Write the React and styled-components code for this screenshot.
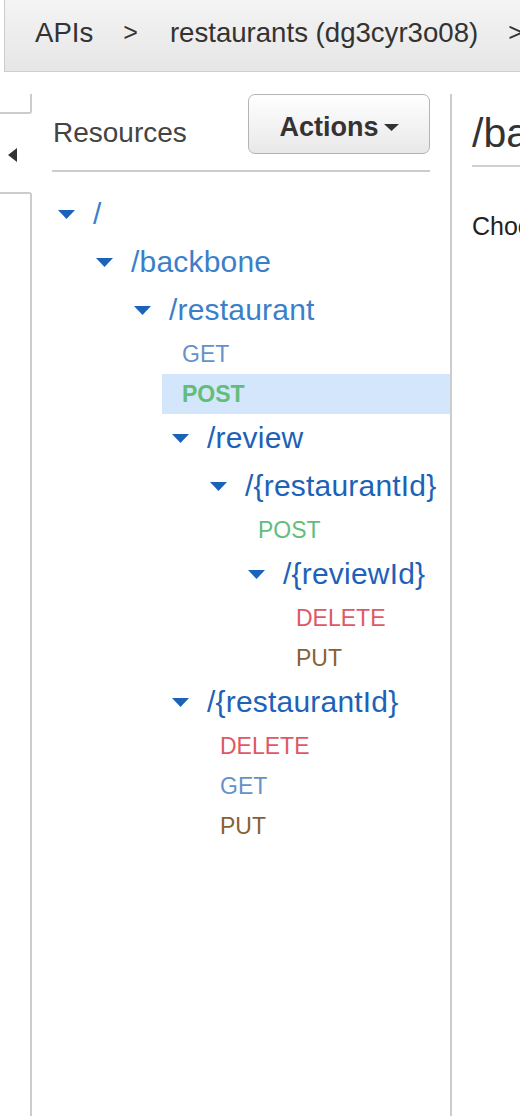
import React from "react";
import styled, { createGlobalStyle } from "styled-components";

const GlobalStyle = createGlobalStyle`
    html, body {
        margin: 0;
        padding: 0;
        background: #ffffff;
        font-family: "Liberation Sans", Arial, sans-serif;
    }
    #root {
        min-height: 100vh;
        display: flex;
        flex-direction: column;
    }
`;

const TopBar = styled.div`
    height: 72px;
    flex: none;
    box-sizing: border-box;
    display: flex;
    align-items: center;
    background: linear-gradient(#f4f4f4, #e6e6e6);
    border-bottom: 1px solid #cfcfcf;
    border-left: 1px solid #cccccc;
    margin-left: 4px;
    padding: 0 0 6px 30px;
    overflow: hidden;
    white-space: nowrap;
    font-size: 27.6px;
    color: #333333;
`;

const Crumb = styled.span`
    flex: none;
`;

const Sep = styled.span`
    flex: none;
    margin: 0 32px 0 30px;
    font-size: 25px;
`;

const Body = styled.div`
    flex: 1;
    display: flex;
    padding-top: 22px;
`;

const SideColumn = styled.div`
    width: 32px;
    flex: none;
    display: flex;
    flex-direction: column;
`;

const SideTopBox = styled.div`
    height: 18px;
    border-right: 2px solid #cccccc;
    border-bottom: 2px solid #cccccc;
    border-bottom-right-radius: 3px;
`;

const CollapseArea = styled.div`
    height: 78px;
    box-sizing: border-box;
    display: flex;
    align-items: center;
    padding: 4px 0 0 8px;
`;

const SideBottomBox = styled.div`
    flex: 1;
    border-right: 2px solid #cccccc;
    border-top: 2px solid #cccccc;
    border-top-right-radius: 3px;
`;

const ResourcePanel = styled.div`
    width: 398px;
    flex: none;
    padding-left: 20px;
    border-right: 2px solid #cccccc;
`;

const PanelHeader = styled.div`
    height: 60px;
    margin-right: 20px;
    padding-bottom: 16px;
    border-bottom: 2px solid #cccccc;
    display: flex;
    align-items: center;
    justify-content: space-between;
`;

const PanelTitle = styled.span`
    font-size: 28px;
    color: #444444;
    padding-left: 1px;
    margin-top: 18px;
`;

const ActionsButton = styled.button`
    width: 182px;
    height: 60px;
    border: 1px solid #b4b4b4;
    border-radius: 7px;
    background: linear-gradient(#ffffff, #e8e8e8);
    font-family: "Liberation Sans", Arial, sans-serif;
    font-size: 27px;
    font-weight: bold;
    color: #333333;
    display: flex;
    align-items: center;
    justify-content: center;
    gap: 5px;
    padding: 6px 0 0 0;
`;

const Tree = styled.div`
    padding-top: 18px;
`;

const ResourceRow = styled.div`
    height: 48px;
    display: flex;
    align-items: center;
    padding-left: ${(p) => 6 + p.$level * 38}px;
    font-size: 30px;
    color: ${(p) => (p.$light ? "#3c7fc9" : "#1d62b7")};
    letter-spacing: 0.2px;
`;

const Caret = styled.span`
    width: 35px;
    flex: none;
    display: flex;
    align-items: center;
`;

const MethodRow = styled.div`
    height: 40px;
    display: flex;
    align-items: center;
    margin-left: ${(p) => 34 + p.$level * 38}px;
    padding-left: 20px;
    font-size: 23px;
    font-weight: ${(p) => (p.$selected ? "bold" : "normal")};
    background: ${(p) => (p.$selected ? "#d3e6fb" : "transparent")};
    color: ${(p) => methodColors[p.$method]};
`;

const methodColors = {
    GET: "#6492c8",
    POST: "#62bd7b",
    DELETE: "#e05863",
    PUT: "#895f34",
};

const DetailPanel = styled.div`
    flex: 1;
    padding-left: 20px;
    overflow: hidden;
    white-space: nowrap;
`;

const DetailTitle = styled.div`
    padding: 15px 0 8px 0;
    line-height: 48px;
    font-size: 41px;
    color: #333333;
    border-bottom: 2px solid #d0d0d0;
`;

const DetailText = styled.div`
    margin-top: 44px;
    line-height: 30px;
    font-size: 25px;
    color: #222222;
`;

const DownTriangle = ({ color = "#1c62b9", w = 17, h = 9 }) => (
    <svg width={w} height={h} viewBox={`0 0 ${w} ${h}`}>
        <path d={`M0 0 L${w} 0 L${w / 2} ${h} Z`} fill={color} />
    </svg>
);

const LeftTriangle = () => (
    <svg width="9" height="14" viewBox="0 0 9 14">
        <path d="M9 0 L9 14 L0 7 Z" fill="#333333" />
    </svg>
);

const tree = [
    { type: "res", level: 0, name: "/", light: true },
    { type: "res", level: 1, name: "/backbone", light: true },
    { type: "res", level: 2, name: "/restaurant", light: true },
    { type: "method", level: 2, name: "GET" },
    { type: "method", level: 2, name: "POST", selected: true },
    { type: "res", level: 3, name: "/review" },
    { type: "res", level: 4, name: "/{restaurantId}" },
    { type: "method", level: 4, name: "POST" },
    { type: "res", level: 5, name: "/{reviewId}" },
    { type: "method", level: 5, name: "DELETE" },
    { type: "method", level: 5, name: "PUT" },
    { type: "res", level: 3, name: "/{restaurantId}" },
    { type: "method", level: 3, name: "DELETE" },
    { type: "method", level: 3, name: "GET" },
    { type: "method", level: 3, name: "PUT" },
];

const App = () => {
    return (
        <>
            <GlobalStyle />
            <TopBar>
                <Crumb>APIs</Crumb>
                <Sep>&gt;</Sep>
                <Crumb>restaurants (dg3cyr3o08)</Crumb>
                <Sep>&gt;</Sep>
                <Crumb>/backbone/restaurant</Crumb>
            </TopBar>

            <Body>
                <SideColumn>
                    <SideTopBox />
                    <CollapseArea>
                        <LeftTriangle />
                    </CollapseArea>
                    <SideBottomBox />
                </SideColumn>

                <ResourcePanel>
                    <PanelHeader>
                        <PanelTitle>Resources</PanelTitle>
                        <ActionsButton>
                            Actions
                            <DownTriangle color="#333333" w={15} h={7} />
                        </ActionsButton>
                    </PanelHeader>

                    <Tree>
                        {tree.map((item, i) =>
                            item.type === "res" ? (
                                <ResourceRow key={i} $level={item.level} $light={item.light}>
                                    <Caret>
                                        <DownTriangle />
                                    </Caret>
                                    {item.name}
                                </ResourceRow>
                            ) : (
                                <MethodRow
                                    key={i}
                                    $level={item.level}
                                    $method={item.name}
                                    $selected={item.selected}
                                >
                                    {item.name}
                                </MethodRow>
                            )
                        )}
                    </Tree>
                </ResourcePanel>

                <DetailPanel>
                    <DetailTitle>/backbone/restaurant - POST</DetailTitle>
                    <DetailText>Choose an integration point for your new method.</DetailText>
                </DetailPanel>
            </Body>
        </>
    );
};

export default App;
